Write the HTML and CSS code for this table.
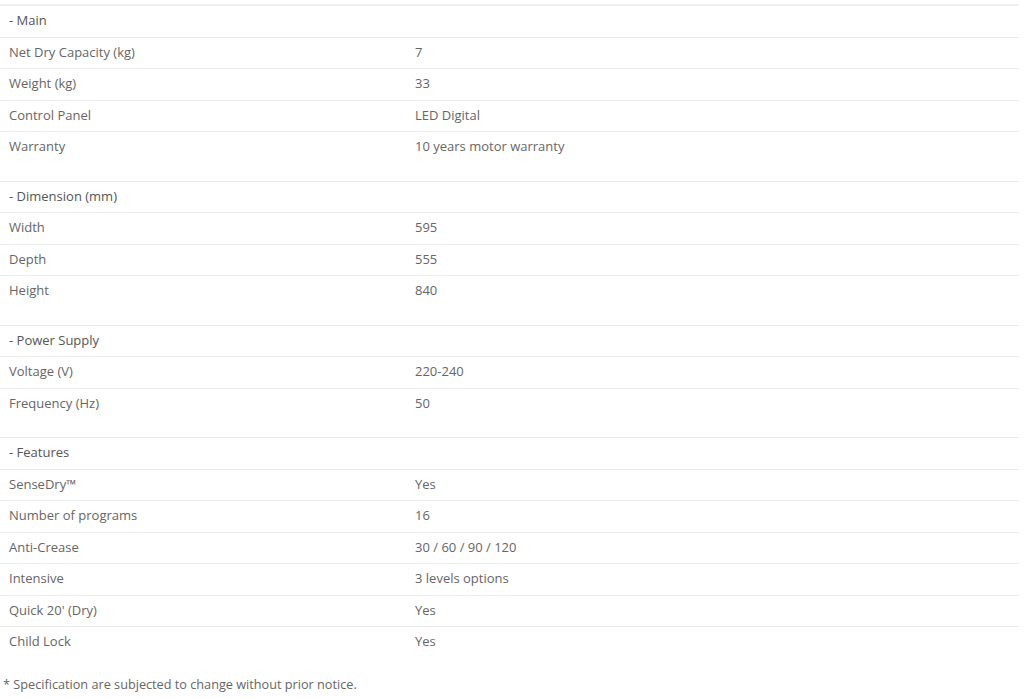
FILE: index.html
```html
<!DOCTYPE html>
<html>
<head>
<meta charset="utf-8">
<link rel="stylesheet" href="styles.css">
</head>
<body>
<div class="specs">
  <div class="group">
    <div class="row head"><div class="cell">- Main</div><div class="cell"></div></div>
    <div class="row"><div class="cell">Net Dry Capacity (kg)</div><div class="cell">7</div></div>
    <div class="row"><div class="cell">Weight (kg)</div><div class="cell">33</div></div>
    <div class="row"><div class="cell">Control Panel</div><div class="cell">LED Digital</div></div>
    <div class="row"><div class="cell">Warranty</div><div class="cell">10 years motor warranty</div></div>
  </div>
  <div class="group">
    <div class="row head"><div class="cell">- Dimension (mm)</div><div class="cell"></div></div>
    <div class="row"><div class="cell">Width</div><div class="cell">595</div></div>
    <div class="row"><div class="cell">Depth</div><div class="cell">555</div></div>
    <div class="row"><div class="cell">Height</div><div class="cell">840</div></div>
  </div>
  <div class="group">
    <div class="row head"><div class="cell">- Power Supply</div><div class="cell"></div></div>
    <div class="row"><div class="cell">Voltage (V)</div><div class="cell">220-240</div></div>
    <div class="row"><div class="cell">Frequency (Hz)</div><div class="cell">50</div></div>
  </div>
  <div class="group">
    <div class="row head"><div class="cell">- Features</div><div class="cell"></div></div>
    <div class="row"><div class="cell">SenseDry™</div><div class="cell">Yes</div></div>
    <div class="row"><div class="cell">Number of programs</div><div class="cell">16</div></div>
    <div class="row"><div class="cell">Anti-Crease</div><div class="cell">30 / 60 / 90 / 120</div></div>
    <div class="row"><div class="cell">Intensive</div><div class="cell">3 levels options</div></div>
    <div class="row"><div class="cell">Quick 20' (Dry)</div><div class="cell">Yes</div></div>
    <div class="row"><div class="cell">Child Lock</div><div class="cell">Yes</div></div>
  </div>
  <p class="note">* Specification are subjected to change without prior notice.</p>
</div>
</body>
</html>
```

FILE: styles.css
```css
html, body {
  margin: 0;
  padding: 0;
  background: #fff;
}
body {
  font-family: "Open Sans", "Noto Sans", sans-serif;
  font-size: 13px;
  color: #666;
}
.specs {
  width: 1019px;
  padding-top: 4px;
}
.group {
  margin-bottom: 18px;
}
.row {
  display: grid;
  grid-template-columns: 408px 1fr;
  border-top: 1px solid #ebebeb;
}
.group:first-child .row:first-child {
  border-top: 2px solid #f0f0f0;
}
.cell {
  padding: 6px 7px 8px;
  line-height: 16.5px;
  min-height: 16.5px;
}
.cell:first-child {
  padding-left: 9px;
}
.head .cell {
  color: #555;
}
.note {
  margin: 0;
  padding: 0 3px;
  font-size: 12.7px;
  line-height: 16px;
}
```
